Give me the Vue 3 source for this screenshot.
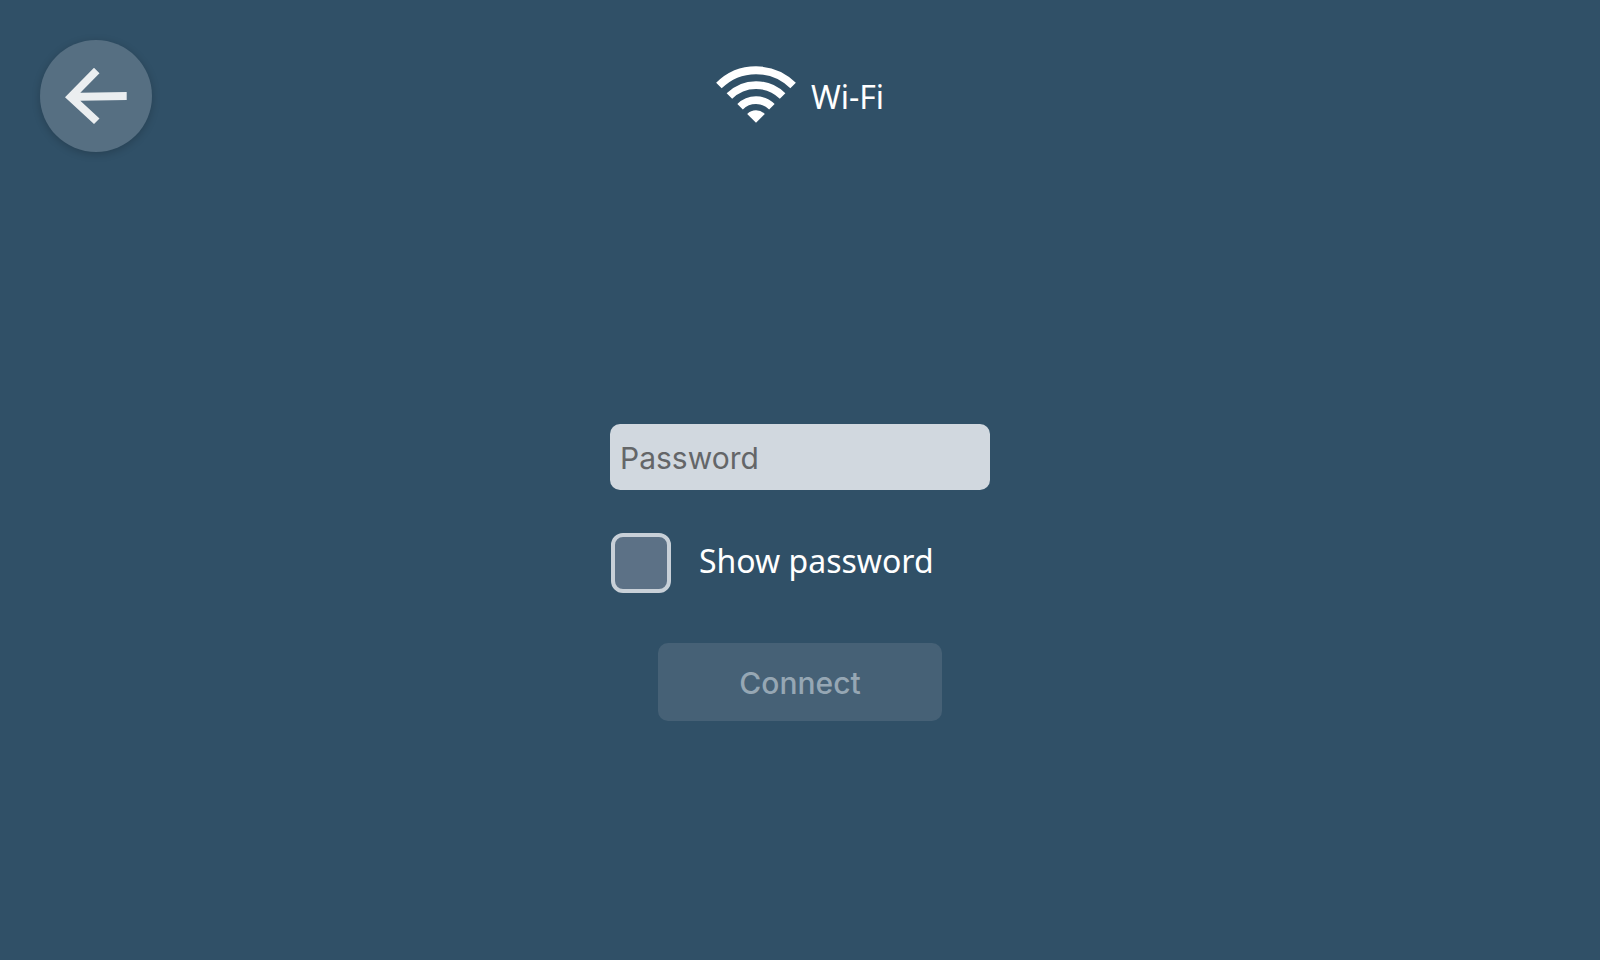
<script setup>
import { ref } from 'vue'

const password = ref('')
const showPassword = ref(false)
</script>

<template>
  <div class="page">
    <header class="header">
      <button class="back" type="button" aria-label="Back">
        <svg viewBox="0 0 112 112" aria-hidden="true">
          <path d="M25 57.3 54 27.7 59.5 33.2 40.3 52.7 86.7 52V60L40.3 60.8 59.5 78.5 54 84Z" fill="#ebeef0" />
        </svg>
      </button>
      <h1 class="title">
        <svg class="wifi" viewBox="0 0 80 60" aria-hidden="true">
          <g fill="none" stroke="#fff" stroke-width="7.8">
            <path d="M2.9 19.6A52.5 52.5 0 0 1 77.1 19.6" />
            <path d="M13.4 30.1A37.6 37.6 0 0 1 66.6 30.1" />
            <path d="M24.1 40.8A22.5 22.5 0 0 1 55.9 40.8" />
          </g>
          <path d="M31.2 47.9A12.4 12.4 0 0 1 48.8 47.9L40 56.7Z" fill="#fff" />
        </svg>
        <span class="name">Wi-Fi</span>
      </h1>
    </header>
    <main class="main">
      <form class="form" @submit.prevent>
        <input
          v-model="password"
          class="field"
          :type="showPassword ? 'text' : 'password'"
          placeholder="Password"
          aria-label="Password"
        />
        <label class="option">
          <input v-model="showPassword" class="check" type="checkbox" />
          <span class="caption">Show password</span>
        </label>
        <button class="connect" type="submit" :disabled="!password">Connect</button>
      </form>
    </main>
  </div>
</template>

<style>
body {
  background: #305067;
}
</style>

<style scoped>
.page {
  display: flex;
  flex-direction: column;
  min-height: 100vh;
  box-sizing: border-box;
  background: #305067;
  color: #fff;
  font-family: "Noto Sans", sans-serif;
  font-size: 32px;
  line-height: 44px;
}
.header {
  display: grid;
  grid-template-columns: 112px 1fr 112px;
  align-items: center;
  padding: 40px;
}
.back {
  width: 112px;
  height: 112px;
  padding: 0;
  border: 0;
  border-radius: 50%;
  background: #566f82;
  box-shadow: 0 2px 8px rgba(0, 0, 0, 0.2);
}
.back svg {
  display: block;
  width: 100%;
}
.title {
  display: flex;
  align-items: center;
  justify-content: center;
  gap: 15px;
  margin: 0;
  font-size: 32px;
  font-weight: 400;
}
.wifi {
  width: 80px;
  height: 60px;
}
.name {
  padding-top: 2px;
}
.main {
  flex: 1;
  display: flex;
  align-items: center;
  justify-content: center;
  padding-bottom: 8px;
}
.form {
  display: flex;
  flex-direction: column;
  width: 380px;
}
.field {
  box-sizing: border-box;
  width: 100%;
  height: 66px;
  padding: 2px 10px 0;
  border: 0;
  border-radius: 10px;
  background: #d1d8df;
  color: #305067;
  font-family: Inter, sans-serif;
  font-size: 30px;
}
.field::placeholder {
  color: #646668;
  opacity: 1;
}
.option {
  display: flex;
  align-items: center;
  gap: 28px;
  margin: 43px 0 50px 1px;
}
.check {
  appearance: none;
  box-sizing: border-box;
  width: 60px;
  height: 60px;
  margin: 0;
  border: 4px solid #c8d0d8;
  border-radius: 12px;
  background: #5c7186;
}
.check:checked {
  background: #c8d0d8;
}
.caption {
  padding-bottom: 4px;
}
.connect {
  align-self: center;
  width: 284px;
  height: 78px;
  padding: 2px 0 0;
  border: 0;
  border-radius: 10px;
  background: #566f82;
  color: #fff;
  font-family: Inter, sans-serif;
  font-size: 30px;
  font-weight: 500;
}
.connect:disabled {
  background: #466176;
  color: #96a7b4;
}
</style>
